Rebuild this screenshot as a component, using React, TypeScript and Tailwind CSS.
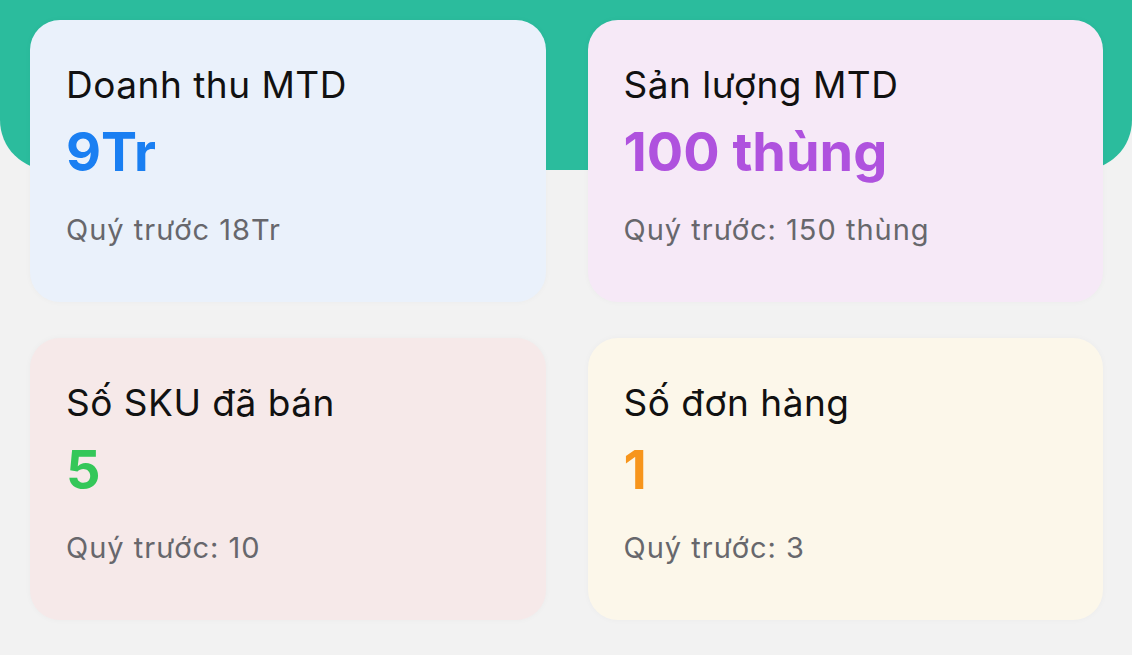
import React from 'react';

interface StatCardProps {
  title: string;
  value: string;
  previous: string;
  bg: string;
  valueColor: string;
}

const stats: StatCardProps[] = [
  { title: 'Doanh thu MTD', value: '9Tr', previous: 'Quý trước 18Tr', bg: 'bg-[#eaf1fb]', valueColor: 'text-[#1a7ff2]' },
  { title: 'Sản lượng MTD', value: '100 thùng', previous: 'Quý trước: 150 thùng', bg: 'bg-[#f6e9f7]', valueColor: 'text-[#af52de]' },
  { title: 'Số SKU đã bán', value: '5', previous: 'Quý trước: 10', bg: 'bg-[#f6e9e9]', valueColor: 'text-[#34c759]' },
  { title: 'Số đơn hàng', value: '1', previous: 'Quý trước: 3', bg: 'bg-[#fcf7ea]', valueColor: 'text-[#f7951c]' },
];

function StatCard({ title, value, previous, bg, valueColor }: StatCardProps) {
  return (
    <div className={`h-[282px] rounded-[30px] px-[36px] pt-[43px] shadow-[0_0_6px_rgba(0,0,0,0.03)] ${bg}`}>
      <div className="text-[37px] leading-[44px] tracking-[0.5px] text-[#111111]">{title}</div>
      <div className={`mt-[13px] text-[54px] leading-[64px] font-bold ${valueColor}`}>{value}</div>
      <div className="mt-[28px] text-[29px] leading-[36px] tracking-[1px] text-[#67676c]">{previous}</div>
    </div>
  );
}

export default function App() {
  return (
    <div className="min-h-[655px] bg-[#f2f2f2] font-['Inter','Noto_Sans',sans-serif]">
      <div className="h-[170px] rounded-b-[50px] bg-[#2bbc9d]" />
      <div className="relative -mt-[150px] grid grid-cols-2 gap-x-[42px] gap-y-[36px] pl-[30px] pr-[29px]">
        {stats.map((s) => (
          <StatCard key={s.title} {...s} />
        ))}
      </div>
    </div>
  );
}
